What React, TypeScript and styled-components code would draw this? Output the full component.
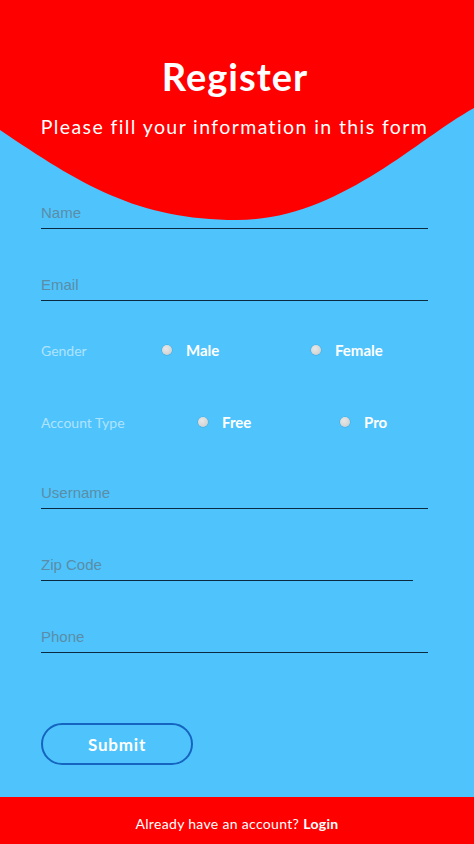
import React from "react";
import styled, { createGlobalStyle } from "styled-components";

const GlobalStyle = createGlobalStyle`
  html, body { margin: 0; padding: 0; }
  body { background: #4fc4fc; font-family: Lato, "Noto Sans", sans-serif; }
  * { box-sizing: border-box; }
`;

const Page = styled.div`
  position: relative;
  width: 474px;
  min-height: 844px;
  display: flex;
  flex-direction: column;
  background: #4fc4fc;
  overflow: hidden;
`;

const Wave = styled.svg`
  position: absolute;
  top: 0;
  left: 0;
  width: 474px;
  height: 222px;
  z-index: 0;
`;

const Header = styled.header`
  position: relative;
  z-index: 1;
  display: flex;
  flex-direction: column;
  align-items: center;
  padding-top: 53px;
  color: #fff;
`;

const Title = styled.h1`
  margin: 0 4px 0 0;
  font-family: Lato, "Noto Sans", sans-serif;
  font-weight: 700;
  font-size: 38px;
  line-height: 46px;
  letter-spacing: 1px;
`;

const Subtitle = styled.p`
  margin: 16px 5px 0 0;
  font-family: Lato, "Noto Sans", sans-serif;
  font-weight: 400;
  font-size: 19.5px;
  line-height: 23px;
  letter-spacing: 1.4px;
`;

const Form = styled.form`
  position: relative;
  z-index: 1;
  display: flex;
  flex-direction: column;
  padding: 58px 46px 0 41px;
`;

const TextInput = styled.input<{ $mt?: number; $short?: boolean }>`
  display: block;
  width: ${(p) => (p.$short ? "372px" : "387px")};
  height: 33px;
  margin: ${(p) => p.$mt ?? 0}px 0 0;
  padding: 0;
  border: none;
  border-bottom: 1px solid #0b2a40;
  background: transparent;
  outline: none;
  font-family: "Liberation Sans", Arial, sans-serif;
  font-size: 15px;
  color: #123;
  &::placeholder { color: #5a8da8; }
`;

const RadioRow = styled.div<{ $cols: string; $mt: number }>`
  display: grid;
  grid-template-columns: ${(p) => p.$cols};
  align-items: center;
  height: 26px;
  margin-top: ${(p) => p.$mt}px;
`;

const RowLabel = styled.span`
  font-family: Lato, "Noto Sans", sans-serif;
  font-size: 14px;
  color: rgba(255, 255, 255, 0.55);
`;

const Option = styled.label`
  display: flex;
  align-items: center;
  gap: 14px;
  font-family: Lato, "Noto Sans", sans-serif;
  font-weight: 700;
  font-size: 15px;
  color: #fff;
`;

const Radio = styled.input`
  appearance: none;
  margin: 0;
  width: 10px;
  height: 10px;
  border-radius: 50%;
  background: radial-gradient(circle at 40% 35%, #e8e8e8 0%, #d6d6d6 60%, #c4c4c4 100%);
  box-shadow: 0 0 0 0.5px rgba(0, 0, 0, 0.15);
`;

const SubmitButton = styled.button`
  width: 152px;
  height: 42px;
  margin-top: 70px;
  border: 2px solid #1565c0;
  border-radius: 21px;
  background: transparent;
  color: #fff;
  font-family: Lato, "Noto Sans", sans-serif;
  font-weight: 700;
  font-size: 17px;
  letter-spacing: 0.8px;
  cursor: pointer;
`;

const Footer = styled.footer`
  margin-top: auto;
  height: 47px;
  background: #ff0000;
  display: flex;
  align-items: center;
  justify-content: center;
  padding-top: 5px;
  font-family: Lato, "Noto Sans", sans-serif;
  font-size: 14px;
  letter-spacing: 0.32px;
  color: #fff;
  b { font-weight: 700; margin-left: 4px; }
`;

export default function App() {
  return (
    <Page>
      <GlobalStyle />
      <Wave viewBox="0 0 474 222" preserveAspectRatio="none">
        <path
          d="M0,0 H474 V108 C414,141.6 337,220 237,220 C137,220 80,184 0,130 Z"
          fill="#ff0000"
        />
      </Wave>
      <Header>
        <Title>Register</Title>
        <Subtitle>Please fill your information in this form</Subtitle>
      </Header>
      <Form onSubmit={(e) => e.preventDefault()}>
        <TextInput placeholder="Name" />
        <TextInput placeholder="Email" $mt={39} />
        <RadioRow $cols="121px 149px 1fr" $mt={36}>
          <RowLabel>Gender</RowLabel>
          <Option>
            <Radio type="radio" name="gender" />
            Male
          </Option>
          <Option>
            <Radio type="radio" name="gender" />
            Female
          </Option>
        </RadioRow>
        <RadioRow $cols="157px 142px 1fr" $mt={46}>
          <RowLabel>Account Type</RowLabel>
          <Option>
            <Radio type="radio" name="account" />
            Free
          </Option>
          <Option>
            <Radio type="radio" name="account" />
            Pro
          </Option>
        </RadioRow>
        <TextInput placeholder="Username" $mt={41} />
        <TextInput placeholder="Zip Code" $mt={39} $short />
        <TextInput placeholder="Phone" $mt={39} />
        <SubmitButton type="submit">Submit</SubmitButton>
      </Form>
      <Footer>
        Already have an account?<b>Login</b>
      </Footer>
    </Page>
  );
}
